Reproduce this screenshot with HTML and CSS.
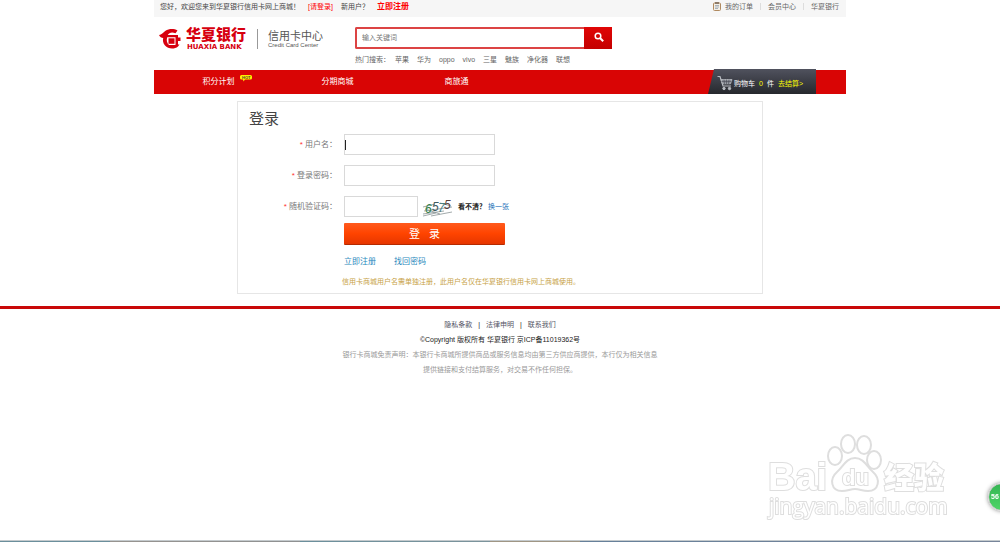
FILE: index.html
```html
<!DOCTYPE html>
<html lang="zh-CN">
<head>
  <meta charset="UTF-8">
  <meta name="viewport" content="width=device-width, initial-scale=1.0">
  <title>华夏银行信用卡网上商城 - 登录</title>
  <link rel="stylesheet" href="styles.css">
</head>
<body>
  <div class="topbar wrap">
    <div class="welcome">
      <span>您好，欢迎您来到华夏银行信用卡网上商城！</span>
      <a href="#" class="login-link">[请登录]</a>
      <span>新用户？</span>
      <a href="#" class="reg-link">立即注册</a>
    </div>
    <div class="quick">
      <svg class="order-icon" width="8" height="9" viewBox="0 0 8 9">
        <rect x="0.5" y="1" width="7" height="7.5" rx="1" fill="#f4efe6" stroke="#b08a60"/>
        <rect x="2" y="0" width="4" height="2" fill="#8d7a68"/>
        <path d="M2 3.5h4M2 5h4M2 6.5h3" stroke="#8899a8" stroke-width="0.7"/>
      </svg>
      <a href="#">我的订单</a>
      <i></i>
      <a href="#">会员中心</a>
      <i></i>
      <a href="#">华夏银行</a>
    </div>
  </div>

  <header class="header wrap">
    <a href="#" class="logo">
      <svg width="22" height="22" viewBox="0 0 22 22">
        <path d="M0 7C3.500 6.500 4 4.500 6.500 2.800C10 0.500 15 0.500 18.500 2.500L16.500 5.200C13 3.800 10 4.500 8.800 7H19V9.500H21.500V13H19V16.500H20.500L19 18.500C15.500 21.500 9 21.200 6 17.500C4 15 3.600 12.500 4.200 10C2.500 10 0.800 9 0 7Z" fill="#d7000f"/>
        <path d="M8.200 9.300H16.500V17H10C7.800 15.500 7.300 12 8.200 9.300Z" fill="#fff"/>
        <rect x="9.500" y="10.300" width="6" height="5.500" fill="#d7000f"/>
      </svg>
      <span class="bank">
        <b>华夏银行</b>
        <small>HUAXIA BANK</small>
      </span>
      <span class="center">
        <b>信用卡中心</b>
        <small>Credit Card Center</small>
      </span>
    </a>
    <div class="search">
      <form class="search-box">
        <input type="text" placeholder="输入关键词" aria-label="搜索">
        <button type="button" aria-label="搜索">
          <svg width="10" height="10" viewBox="0 0 10 10" fill="none" stroke="#fff">
            <circle cx="4" cy="4" r="2.800" stroke-width="1.500"/>
            <path d="M6 6L9.200 9.200" stroke-width="2"/>
          </svg>
        </button>
      </form>
      <div class="hot">
        <span>热门搜索：</span>
        <a href="#">苹果</a>
        <a href="#">华为</a>
        <a href="#">oppo</a>
        <a href="#">vivo</a>
        <a href="#">三星</a>
        <a href="#">魅族</a>
        <a href="#">净化器</a>
        <a href="#">联想</a>
      </div>
    </div>
  </header>

  <nav class="nav wrap">
    <a href="#">积分计划
      <svg class="hot-badge" width="12" height="7" viewBox="0 0 12 7">
        <path d="M1.500 0H10.500Q12 0 12 1.500V3Q12 4.500 10.500 4.500H5L3.500 6.500L3 4.500H1.500Q0 4.500 0 3V1.500Q0 0 1.500 0Z" fill="#fff000"/>
        <text x="2" y="4">HOT</text>
      </svg>
    </a>
    <a href="#">分期商城</a>
    <a href="#">商旅通</a>
    <div class="cart">
      <svg width="16" height="16" viewBox="0 0 16 16" fill="none" stroke="#b9bcc2">
        <path d="M0.500 1.500H3L6 11H14" stroke-width="1.200"/>
        <path d="M4 4.500H15L13.500 8.800H5.500Z" fill="#8d9098" stroke-width="0.800"/>
        <path d="M7 4.500L7.500 9M9.500 4.500V9M12 4.500L11.500 9M4.500 6.500H14.500" stroke="#484a55" stroke-width="0.600"/>
        <circle cx="7" cy="13.500" r="1.200" fill="#b9bcc2"/>
        <circle cx="12.500" cy="13.500" r="1.200" fill="#b9bcc2"/>
      </svg>
      <span>购物车</span>
      <em>0</em>
      <span>件</span>
      <a href="#">去结算&gt;</a>
    </div>
  </nav>

  <main class="panel">
    <h1>登录</h1>
    <form>
      <div class="row">
        <label for="user"><em>*</em> 用户名：</label>
        <input type="text" id="user" class="active">
      </div>
      <div class="row">
        <label for="pwd"><em>*</em> 登录密码：</label>
        <input type="password" id="pwd">
      </div>
      <div class="row">
        <label for="code"><em>*</em> 随机验证码：</label>
        <input type="text" id="code" class="short">
        <svg class="captcha" width="32" height="20" viewBox="0 0 32 20">
          <path d="M1 10L13 7M2 14L30 10M1 17L22 14M9 19L30 15M18 6L29 9M3 12L18 17M1 19L14 16" stroke="#8a9496" stroke-width="0.800"/>
          <text x="3" y="16" fill="#2e7d46">6</text>
          <text x="10" y="14" fill="#3c5a60">5</text>
          <text x="16" y="15" fill="#4a8080">7</text>
          <text x="22" y="12" fill="#5a3f38">5</text>
        </svg>
        <span class="unclear">看不清？</span>
        <a href="#" class="change">换一张</a>
      </div>
      <div class="actions">
        <button type="button">登&nbsp;&nbsp;&nbsp;录</button>
        <div class="links">
          <a href="#">立即注册</a>
          <a href="#">找回密码</a>
        </div>
      </div>
      <p class="note">信用卡商城用户名需单独注册，此用户名仅在华夏银行信用卡网上商城使用。</p>
    </form>
  </main>

  <footer class="footer">
    <p class="footer-links"><a href="#">隐私条款</a><i>|</i><a href="#">法律申明</a><i>|</i><a href="#">联系我们</a></p>
    <p class="copy">©Copyright 版权所有 华夏银行 京ICP备11019362号</p>
    <p>银行卡商城免责声明：本银行卡商城所提供商品或服务信息均由第三方供应商提供，本行仅为相关信息<br>提供链接和支付结算服务，对交易不作任何担保。</p>
  </footer>

  <svg class="watermark" width="184" height="94" viewBox="0 0 184 94">
    <text class="bai" x="2" y="58">Bai</text>
    <g class="paw">
      <ellipse cx="69" cy="24" rx="7" ry="9"/>
      <ellipse cx="82" cy="12" rx="7" ry="9"/>
      <ellipse cx="98" cy="13" rx="7" ry="9"/>
      <ellipse cx="108" cy="28" rx="7" ry="9"/>
      <path d="M89 26C98 26 101 35 107 40C115 47 113 59 102 59C96 59 94 57 89 57C84 57 82 59 76 59C65 59 63 47 71 40C77 35 80 26 89 26Z"/>
    </g>
    <text class="du" x="76" y="53">du</text>
    <text class="jy" x="118" y="56">经验</text>
    <text class="url" x="3" y="82">jingyan.baidu.com</text>
  </svg>
  <div class="bubble">56</div>
  <div class="edge"></div>
</body>
</html>
```
FILE: styles.css
```css
* {
  box-sizing: border-box;
}
body {
  margin: 0;
  min-height: 100vh;
  background: #fff;
  color: #666;
  font: 7px/14px "Liberation Sans", "Noto Sans CJK SC", sans-serif;
}
a {
  color: inherit;
  text-decoration: none;
}
i, em {
  font-style: normal;
}
p {
  margin: 0;
}
input, button {
  font: inherit;
  border-radius: 0;
}
.wrap {
  max-width: 692px;
  margin: 0 auto;
}

/* top bar */
.topbar {
  display: flex;
  justify-content: space-between;
  height: 17px;
  padding: 0 7px 0 6px;
  background: #f6f6f6;
  color: #444;
}
.welcome, .quick {
  display: flex;
}
.welcome {
  gap: 8px;
}
.login-link {
  color: #f00;
}
.reg-link {
  color: #f00;
  font-size: 8px;
  font-weight: bold;
}
.quick {
  gap: 7px;
  color: #666;
}
.quick i {
  width: 1px;
  height: 7px;
  margin-top: 3px;
  background: #ddd;
}
.order-icon {
  margin: 2px -3px 0 0;
}

/* header */
.header {
  display: flex;
  height: 53px;
  padding: 10px 5px 0;
}
.logo {
  display: flex;
  width: 196px;
  height: 24px;
}
.logo svg {
  margin-top: 1px;
}
.bank, .center {
  display: flex;
  flex-direction: column;
  flex-shrink: 0;
}
.bank {
  width: 64px;
  margin-left: 5px;
  color: #d7000f;
}
.bank b {
  font-size: 15px;
  font-weight: 900;
  line-height: 16px;
}
.bank small {
  padding-left: 1px;
  font: bold 7px/8px "DejaVu Sans", sans-serif;
}
.center {
  height: 20px;
  margin: 2px 0 0 7px;
  padding-left: 10px;
  border-left: 1px solid #999;
  color: #555;
}
.center b {
  font-size: 11px;
  font-weight: normal;
  line-height: 14px;
}
.center small {
  font-size: 6px;
  line-height: 5px;
}
.search-box {
  display: flex;
  width: 257px;
  height: 22px;
}
.search-box input {
  flex: 1;
  min-width: 0;
  padding: 0 5px;
  border: 2px solid #dc4444;
  border-right: 0;
  border-radius: 2px 0 0 2px;
  outline: none;
}
.search-box input::placeholder {
  color: #777;
}
.search-box button {
  width: 28px;
  padding: 2px 0 0 2px;
  border: 0;
  background: linear-gradient(#e00606, #c40000);
}
.hot {
  display: flex;
  gap: 8px;
  margin-top: 4px;
}
.hot span {
  margin-right: -3px;
}

/* nav */
.nav {
  display: flex;
  height: 24px;
  padding: 0 30px 0 5px;
  background: #d90505;
  color: #fff;
  font-size: 8px;
  line-height: 24px;
}
.nav > a {
  position: relative;
  width: 119px;
  text-align: center;
}
.hot-badge {
  position: absolute;
  top: 5px;
  left: 81px;
}
.hot-badge text {
  font: bold 4px "Liberation Sans", sans-serif;
  fill: #533;
}
.cart {
  display: flex;
  gap: 4px;
  width: 108px;
  height: 25px;
  margin: -1px 0 0 auto;
  padding: 2px 0 0 9px;
  background: linear-gradient(#50525e, #26282d);
  clip-path: polygon(6px 0, 100% 0, 100% 100%, 0 100%);
  font-size: 7px;
  line-height: 26px;
}
.cart svg {
  margin: 4px -3px 0 0;
}
.cart em, .cart a {
  color: #ff0;
}

/* login */
.panel {
  max-width: 526px;
  height: 193px;
  margin: 7px auto 12px;
  padding: 8px 0 0 11px;
  border: 1px solid #e6e6e6;
}
.panel h1 {
  margin: 0 0 6px;
  color: #444;
  font-size: 15px;
  font-weight: normal;
  line-height: 18px;
}
.row {
  display: flex;
  align-items: center;
  height: 21px;
  margin-bottom: 10px;
}
.row label {
  width: 88px;
  margin-right: 7px;
  color: #777;
  font-size: 8px;
  text-align: right;
  white-space: nowrap;
}
.row label em {
  color: #f33;
}
.row input {
  width: 151px;
  height: 21px;
  padding: 0 1px;
  border: 1px solid #d9d9d9;
  outline: none;
  font-size: 11px;
}
.row .active {
  background: linear-gradient(#222, #222) 0 center / 1px 10px no-repeat;
}
.row .short {
  width: 74px;
}
.captcha {
  margin-left: 4px;
}
.captcha text {
  font: italic 12px "Liberation Sans", sans-serif;
}
.unclear {
  margin: 0 2px 0 4px;
  color: #222;
  font-weight: bold;
}
.change {
  color: #1b70b8;
}
.actions {
  margin: -4px 0 0 95px;
}
.actions button {
  display: block;
  width: 161px;
  height: 22px;
  padding: 0;
  border: 0;
  border-bottom: 1px solid #b52a00;
  border-radius: 1px;
  background: linear-gradient(#ff5a1e, #ff4400 50%, #e63600);
  color: #fff;
  font-size: 11px;
}
.links {
  display: flex;
  gap: 18px;
  margin-top: 10px;
  color: #1f88bd;
  font-size: 8px;
}
.note {
  margin: 6px 0 0 93px;
  color: #c79f45;
}

/* footer */
.footer {
  padding-top: 8px;
  border-top: 3px solid #c90808;
  color: #999;
  line-height: 15px;
  text-align: center;
}
.footer-links {
  color: #556;
}
.footer-links i {
  margin: 0 6px;
  color: #222;
}
.copy {
  color: #222;
}

/* overlays */
.watermark {
  position: fixed;
  right: 50px;
  bottom: 16px;
  fill: #fff;
  stroke: #dedede;
  stroke-width: 2px;
}
.watermark text {
  paint-order: stroke;
}
.bai {
  font: bold 38px "Liberation Sans", sans-serif;
}
.du {
  font: bold 22px "Liberation Sans", sans-serif;
}
.jy {
  font: 900 30px "Noto Sans CJK SC", sans-serif;
}
.url {
  font: 21px "Open Sans", sans-serif;
}
.bubble {
  position: fixed;
  right: -16px;
  bottom: 31px;
  width: 28px;
  height: 28px;
  padding-left: 2px;
  border: 1px solid #c8c8c8;
  border-radius: 50%;
  background: linear-gradient(#35b553, #4ed567);
  box-shadow: 0 0 4px #888;
  color: #fff;
  font-weight: bold;
  line-height: 25px;
}
.edge {
  position: fixed;
  right: 0;
  bottom: 0;
  left: 0;
  height: 2px;
  border-top: 1px solid #c4cacd;
  background: linear-gradient(90deg, #6b8f9c 11%, #979490 11%, #8f9192 30%, #6b8f9c 30%, #7c949c 49%, #a09684 49%, #a09684 58%, #66809a 58%, #77859a);
}
```
